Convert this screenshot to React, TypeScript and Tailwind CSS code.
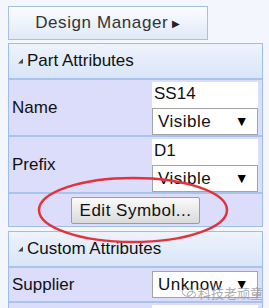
import React from 'react';

const Tri = () => (
  <svg width="8" height="8" viewBox="0 0 8 8" className="shrink-0">
    <path d="M7 1.5 L7 6.5 L2 6.5 Z" fill="#4a4a4a" />
  </svg>
);

const SelectBox = ({ value }: { value: string }) => (
  <div className="flex h-[27px] items-center justify-between border border-[#a4a4a4] bg-white pl-[5px] pr-[8px] text-[17px] tracking-[0.5px] text-[#111]">
    <span>{value}</span>
    <span className="text-[14px] text-black">▼</span>
  </div>
);

const Header = ({ title }: { title: string }) => (
  <div className="flex h-[34px] items-center gap-[3px] bg-gradient-to-b from-[#eef3fc] to-[#d9e5f8] pl-[7px] text-[17px] text-[#111]">
    <Tri />
    <span>{title}</span>
  </div>
);

const AttrRow = ({ label, text }: { label: string; text: string }) => (
  <div className="flex h-[57px] border-t-2 border-[#a9c3ec] bg-[#dcdcfb]">
    <div className="flex w-[141px] items-center pl-[3px] text-[17px] text-[#111]">{label}</div>
    <div className="flex flex-1 flex-col pt-[2px] pr-[4px] pl-[2px]">
      <div className="h-[26px] bg-white pl-[2px] text-[17px] leading-[24px] text-[#111]">{text}</div>
      <SelectBox value="Visible" />
    </div>
  </div>
);

export default function App() {
  return (
    <div
      className="relative h-[308px] w-[269px] overflow-hidden bg-[#f3f6fc] pt-[6px] pl-[8px]"
      style={{ fontFamily: '"Liberation Sans", Arial, sans-serif' }}
    >
      <div className="flex h-[34px] w-[200px] items-center justify-center gap-[4px] border border-[#a9c0e6] bg-gradient-to-b from-[#fbfcff] to-[#e0e9f8] text-[17px] tracking-[0.6px] text-[#333]">
        <span>Design Manager</span>
        <span className="text-[10px] text-[#222]">▶</span>
      </div>

      <div className="mt-[3px] w-[255px] border border-[#a0bce8]">
        <Header title="Part Attributes" />
        <AttrRow label="Name" text="SS14" />
        <AttrRow label="Prefix" text="D1" />
        <div className="flex h-[34px] items-center justify-center border-t-2 border-[#a9c3ec] bg-[#dcdcfb]">
          <button className="h-[27px] w-[129px] rounded-[2px] border border-[#9c9c9c] bg-gradient-to-b from-[#fafafa] to-[#dadada] text-[17px] tracking-[0.5px] text-[#111]">
            Edit Symbol...
          </button>
        </div>
      </div>

      <div className="mt-[4px] w-[255px] border border-[#a0bce8]">
        <Header title="Custom Attributes" />
        <div className="flex h-[35px] border-t-2 border-[#a9c3ec] bg-[#dcdcfb]">
          <div className="flex w-[141px] items-center pl-[3px] text-[17px] text-[#111]">Supplier</div>
          <div className="flex flex-1 items-center pr-[4px] pl-[2px]">
            <div className="w-full">
              <SelectBox value="Unknow" />
            </div>
          </div>
        </div>
        <div className="flex h-[30px] border-t-2 border-[#a9c3ec] bg-[#dcdcfb]">
          <div className="w-[141px]" />
          <div className="flex-1 pt-[2px] pr-[4px] pl-[2px]">
            <div className="h-full bg-white" />
          </div>
        </div>
      </div>

      <svg className="pointer-events-none absolute left-0 top-0" width="269" height="308">
        <ellipse cx="133" cy="210" rx="94" ry="32" fill="none" stroke="#e2323c" strokeWidth="2.5" />
      </svg>

      <div className="pointer-events-none absolute left-[182px] top-[285px] flex items-center gap-[2px] text-[#9a9a9a] opacity-80">
        <svg width="14" height="12" viewBox="0 0 14 12">
          <ellipse cx="5.5" cy="5" rx="5" ry="4.2" fill="none" stroke="#9a9a9a" strokeWidth="1" />
          <ellipse cx="9.5" cy="7.5" rx="4" ry="3.3" fill="none" stroke="#9a9a9a" strokeWidth="1" />
        </svg>
        <span className="text-[13px] leading-[16px]" style={{ fontFamily: '"Noto Sans CJK SC", sans-serif' }}>科技老顽童</span>
      </div>
    </div>
  );
}
